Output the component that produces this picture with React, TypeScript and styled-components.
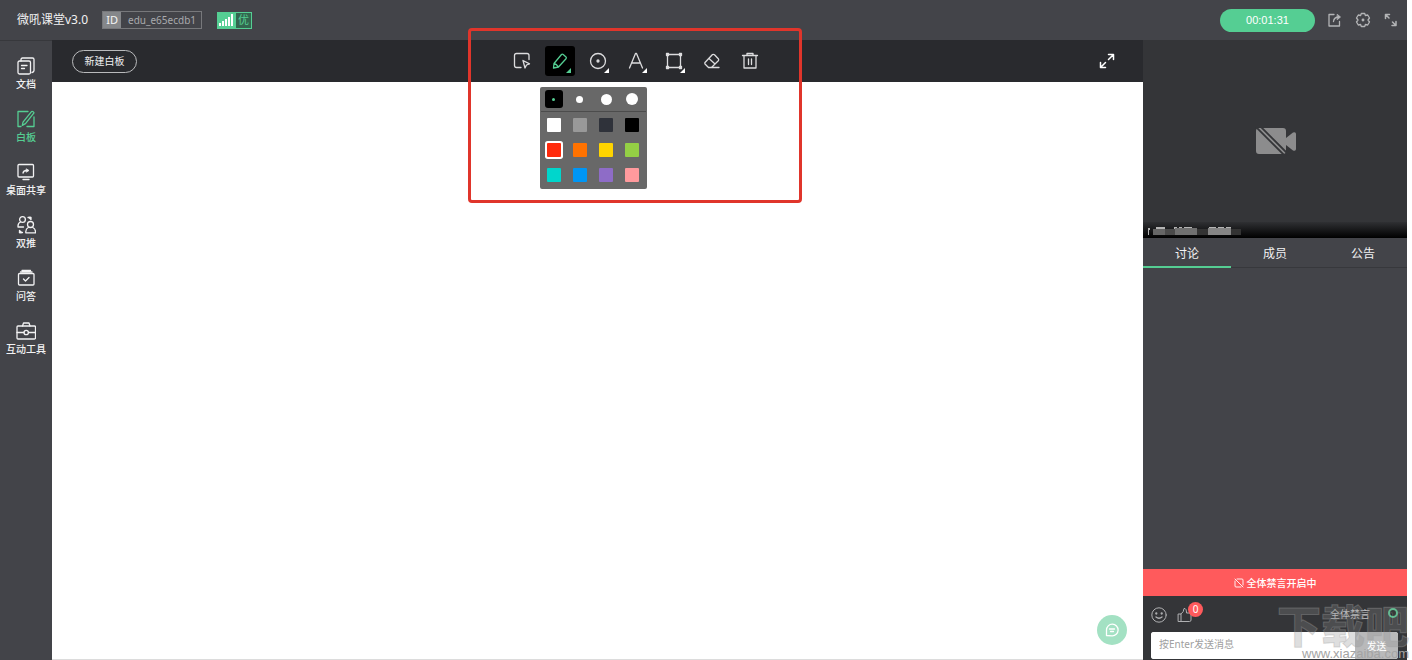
import React, { useState } from "react";
import styled, { createGlobalStyle, css } from "styled-components";

const color = {
  chrome: "#434449",
  bar: "#292a2e",
  panel: "#343538",
  line: "#37383c",
  green: "#55ce93",
  red: "#ff5a5c",
  text: "#f2f2f3",
  icon: "#dcdcde",
};

const GlobalStyle = createGlobalStyle`
  * { box-sizing: border-box; }
  body {
    margin: 0;
    background: #fff;
    font-family: "Noto Sans", "Noto Sans CJK SC", sans-serif;
    font-size: 10px;
    color: ${color.text};
  }
  button, input { font: inherit; color: inherit; }
  button { border: 0; padding: 0; background: none; cursor: pointer; }
  svg { display: block; }
`;

const Page = styled.div`
  display: grid;
  grid-template-rows: 40px 1fr;
  min-height: 100vh;
  padding-right: 5px;
  overflow: hidden;
`;

const Header = styled.header`
  display: flex;
  align-items: center;
  padding: 0 8px 0 17px;
  background: ${color.chrome};
`;

const Title = styled.h1`
  margin: 0 14px 0 0;
  font-size: 12px;
  line-height: 16px;
  font-weight: 400;
`;

const IdBox = styled.div`
  display: flex;
  width: 100px;
  height: 18px;
  margin-right: 15px;
  border: 1px solid #77787b;
  line-height: 16px;
  color: #a9aaad;
`;

const IdLabel = styled.span`
  width: 18px;
  background: #85878a;
  color: #f4f4f4;
  font-size: 11px;
  text-align: center;
`;

const IdValue = styled.span`
  flex: 1;
  text-align: center;
  padding-left: 2px;
`;

const Signal = styled.div`
  display: flex;
  align-items: center;
  gap: 2px;
  width: 35px;
  height: 17px;
  padding: 1px 1px 1px 2px;
  background: ${color.green};
`;

const SignalGrade = styled.span`
  flex: 1;
  height: 15px;
  background: #33664f;
  color: ${color.green};
  font-size: 11px;
  line-height: 14px;
  text-align: center;
`;

const HeaderActions = styled.div`
  display: flex;
  align-items: center;
  gap: 12px;
  margin-left: auto;
  color: #b3b4b6;
`;

const Timer = styled.button`
  width: 95px;
  height: 23px;
  border-radius: 12px;
  background: ${color.green};
  color: #fff;
  font-family: "Liberation Sans", sans-serif;
  font-size: 11px;
`;

const IconButton = styled.button`
  display: grid;
  place-items: center;
  width: 16px;
  height: 16px;
`;

const Body = styled.div`
  display: grid;
  grid-template-columns: 52px minmax(0, 1fr) 264px;
`;

const Sidebar = styled.nav`
  display: flex;
  flex-direction: column;
  gap: 18px;
  padding-top: 15px;
  background: ${color.chrome};
  border-top: 1px solid ${color.line};
`;

const NavItem = styled.button<{ $active?: boolean }>`
  display: flex;
  flex-direction: column;
  align-items: center;
  gap: 1px;
  line-height: 14px;
  white-space: nowrap;
  font-weight: 500;
  color: ${(p) => (p.$active ? color.green : color.text)};
`;

const Board = styled.main`
  display: flex;
  flex-direction: column;
  background: #fff;
  position: relative;
  border-bottom: 1px solid #dcdcdc;
`;

const Toolbar = styled.div`
  display: grid;
  grid-template-columns: 1fr auto 1fr;
  align-items: center;
  height: 42px;
  padding: 0 28px 0 20px;
  background: ${color.bar};
`;

const NewBoard = styled.button`
  justify-self: start;
  width: 65px;
  height: 23px;
  border: 1px solid #b9babc;
  border-radius: 12px;
  line-height: 14px;
`;

const Tools = styled.div`
  position: relative;
  display: flex;
  gap: 8px;
  margin-left: 84px;
  color: ${color.icon};
`;

const ToolSlot = styled.div`
  position: relative;
`;

const ToolButton = styled.button<{ $active?: boolean }>`
  display: grid;
  place-items: center;
  width: 30px;
  height: 30px;
  border-radius: 3px;
  ${(p) =>
    p.$active &&
    css`
      background: #000;
      color: ${color.green};
    `}
`;

const Corner = styled.svg`
  position: absolute;
  right: 4px;
  bottom: 3px;
  pointer-events: none;
`;

const Palette = styled.div`
  position: absolute;
  z-index: 2;
  top: 41px;
  left: -5px;
  width: 107px;
  padding: 0 1px 2px;
  border-radius: 2px;
  background: #686868;
`;

const PaletteRow = styled.div<{ $divided?: boolean }>`
  display: grid;
  grid-template-columns: repeat(4, 1fr);
  place-items: center;
  height: 25px;
  ${(p) => p.$divided && "border-bottom: 1px solid #4c4c4c;"}
`;

const SizeOption = styled.button<{ $size: number; $active: boolean }>`
  display: grid;
  place-items: center;
  width: 18px;
  height: 18px;
  border-radius: 3px;
  background: ${(p) => (p.$active ? "#000" : "none")};
  &::before {
    content: "";
    width: ${(p) => p.$size}px;
    height: ${(p) => p.$size}px;
    border-radius: 50%;
    background: ${(p) => (p.$active ? color.green : "#fff")};
  }
`;

const Swatch = styled.button<{ $fill: string; $active: boolean }>`
  width: 14px;
  height: 14px;
  border-radius: 1px;
  background: ${(p) => p.$fill};
  ${(p) => p.$active && "box-shadow: 0 0 0 2px #fff;"}
`;

const Callout = styled.div`
  position: absolute;
  z-index: 3;
  top: -18px;
  left: -39px;
  right: -37px;
  height: 175px;
  border: 3px solid #e0352b;
  border-radius: 4px;
  pointer-events: none;
`;

const Expand = styled(IconButton)`
  justify-self: end;
  color: #fff;
`;

const ChatBubble = styled.button`
  position: absolute;
  right: 16px;
  bottom: 14px;
  display: grid;
  place-items: center;
  width: 30px;
  height: 30px;
  border-radius: 50%;
  background: #a3e1c3;
  color: #fff;
`;

const Aside = styled.aside`
  position: relative;
  display: flex;
  flex-direction: column;
  background: ${color.chrome};
`;

const Video = styled.section`
  display: flex;
  flex-direction: column;
  height: 198px;
  background: ${color.panel};
`;

const CameraOff = styled.div`
  flex: 1;
  display: grid;
  place-items: center;
  padding: 22px 0 0 2px;
`;

const NameBar = styled.div`
  height: 16px;
  padding: 4px 0 0 5px;
  background: linear-gradient(#2f3033, #000);
`;

const Tabs = styled.div`
  display: grid;
  grid-template-columns: repeat(3, 1fr);
  height: 30px;
  border-bottom: 1px solid ${color.line};
`;

const Tab = styled.button<{ $active: boolean }>`
  height: 30px;
  padding-top: 4px;
  border-bottom: 2px solid ${(p) => (p.$active ? color.green : "transparent")};
  font-size: 12px;
  line-height: 16px;
`;

const Messages = styled.div`
  flex: 1;
`;

const MuteBanner = styled.div`
  display: flex;
  align-items: center;
  justify-content: center;
  gap: 3px;
  height: 27px;
  background: ${color.red};
  color: #fff;
  font-weight: 500;
`;

const Composer = styled.form`
  display: flex;
  flex-direction: column;
  gap: 2px;
  padding: 4px 9px 1px 8px;
  height: 64px;
  background: ${color.panel};
`;

const ComposerTools = styled.div`
  display: flex;
  align-items: center;
  gap: 9px;
  height: 30px;
  color: #b0b1b3;
`;

const LikeButton = styled(IconButton)`
  position: relative;
  width: 18px;
  height: 18px;
`;

const Badge = styled.span`
  position: absolute;
  left: 12px;
  top: -4px;
  width: 15px;
  height: 15px;
  border-radius: 50%;
  background: ${color.red};
  color: #fff;
  line-height: 15px;
  text-align: center;
`;

const MuteToggle = styled.label`
  display: flex;
  align-items: center;
  gap: 18px;
  height: 26px;
  margin-left: auto;
  align-self: flex-start;
  color: #c4c5c7;
`;

const MuteInput = styled.input`
  appearance: none;
  width: 10px;
  height: 10px;
  margin: 0;
  border: 2px solid ${color.green};
  border-radius: 50%;
  background: #16191a;
`;

const InputRow = styled.div`
  display: flex;
  height: 27px;
  border-radius: 3px;
  overflow: hidden;
  background: #fff;
`;

const MessageInput = styled.input`
  flex: 1;
  min-width: 0;
  border: 0;
  padding: 0 8px 3px;
  background: #fff;
  color: #333;
  &::placeholder {
    color: #a0a0a0;
    opacity: 1;
  }
`;

const SendButton = styled.button`
  width: 43px;
  background: #b9b9ba;
  color: #fff;
`;

const Watermark = styled.div`
  position: absolute;
  right: -2px;
  bottom: 0;
  width: 132px;
  pointer-events: none;
  text-align: right;
`;

const WatermarkName = styled.div`
  color: rgba(140, 140, 140, 0.3);
  -webkit-text-stroke: 1px rgba(160, 160, 160, 0.35);
  font-family: "Noto Sans CJK SC", sans-serif;
  font-size: 44px;
  line-height: 46px;
  font-weight: 900;
  white-space: nowrap;
`;

const WatermarkUrl = styled.div`
  font-family: "Liberation Sans", sans-serif;
  font-size: 13px;
  line-height: 13px;
  color: #a4a4a4;
`;

type IconProps = { size?: number; children: React.ReactNode };

const Icon = ({ size = 20, children }: IconProps) => (
  <svg
    width={size}
    height={size}
    viewBox={`0 0 ${size} ${size}`}
    fill="none"
    stroke="currentColor"
    strokeWidth="1.3"
    strokeLinecap="round"
    strokeLinejoin="round"
    aria-hidden="true"
  >
    {children}
  </svg>
);

const navItems = [
  {
    label: "文档",
    icon: (
      <>
        <rect x="2" y="5" width="12.5" height="13" rx="1.5" />
        <path d="M5 5V3.5Q5 2 6.500 2H16.500Q18 2 18 3.500V14.500Q18 16 16 16.500M5.500 9.500H11M5.500 12.500H8.500" />
      </>
    ),
  },
  {
    label: "白板",
    icon: (
      <>
        <path d="M12 2.500H2V17.500H5M11 17.500H18V8M7 13.200L15.500 2.600Q17 2 18 3.800L9.500 14.600L6.300 16.400Z" />
      </>
    ),
  },
  {
    label: "桌面共享",
    icon: (
      <>
        <rect x="2" y="2.500" width="15.500" height="12.500" rx="1" />
        <path d="M7 17.500H13M7 11Q7.500 8.500 10.500 8.500" />
        <path d="M10.500 7L13 8.500L10.500 10Z" fill="currentColor" strokeWidth="0.800" />
      </>
    ),
  },
  {
    label: "双推",
    icon: (
      <>
        <circle cx="6.500" cy="4.500" r="2.900" />
        <path d="M4.500 7Q2 8 2 11V12H7.500M14 17.800H19.500V16.500Q19.200 13.500 16.800 12.500M9.800 17.800H14M9.800 17.800V16.500Q10 13.500 12.300 12.500M12 2.500H14.500M3.500 17.500H6.500" />
        <circle cx="14.500" cy="9.500" r="3" />
        <path d="M13 2.500H15V4.500ZM3.500 15.500V17.500H5.500Z" fill="currentColor" />
      </>
    ),
  },
  {
    label: "问答",
    icon: (
      <>
        <rect x="2.500" y="5.500" width="15.500" height="11.500" rx="1" />
        <path d="M6 2.500H14.500M4.500 4H16M7.500 11L9.500 13L13 9.500" />
      </>
    ),
  },
  {
    label: "互动工具",
    icon: (
      <>
        <rect x="1" y="5" width="18.500" height="13" rx="1" />
        <path d="M6.500 5L7.500 2H13L14 5M1 11.500H8M12.500 11.500H19.500" />
        <circle cx="10.200" cy="11.500" r="2.200" />
      </>
    ),
  },
];

const tools = [
  {
    label: "选择",
    menu: false,
    icon: (
      <>
        <path d="M9 16.500H4.500Q2.500 16.500 2.500 14.500V4.500Q2.500 2.500 4.500 2.500H15Q17 2.500 17 4.500V8.500" />
        <path d="M11 9.500L17.500 12.800L14.500 14L13 17Z" />
      </>
    ),
  },
  {
    label: "画笔",
    menu: true,
    icon: (
      <path d="M4 12.500L11.500 3.500Q12.300 2.700 13.200 3.500L16 6Q16.800 6.800 16 7.700L8.500 16L3.500 17ZM4 12.500Q6.500 13 8.500 16" />
    ),
  },
  {
    label: "图形",
    menu: true,
    icon: (
      <>
        <circle cx="10" cy="10" r="7.500" />
        <circle cx="10" cy="10" r="1" fill="currentColor" />
      </>
    ),
  },
  {
    label: "文字",
    menu: true,
    icon: <path d="M3.500 17L9.500 2.500H10.500L16.500 17M5.500 12H14.500" />,
  },
  {
    label: "选框",
    menu: true,
    icon: (
      <>
        <rect x="3.500" y="3.500" width="13" height="13" />
        <path
          d="M2.500 2.500H4.500V4.500H2.500ZM15.500 2.500H17.500V4.500H15.500ZM2.500 15.500H4.500V17.500H2.500ZM15.500 15.500H17.500V17.500H15.500Z"
          fill="currentColor"
        />
      </>
    ),
  },
  {
    label: "橡皮擦",
    menu: false,
    icon: (
      <path d="M3 11.500L10.500 3.500Q11.500 3 12.500 3.800L16.500 8Q17 9 16.300 9.800L9.500 16.500H6.500L3 13Q2.500 12.200 3 11.500ZM7 7.500L13 13M9.500 16.500H17" />
    ),
  },
  {
    label: "清空",
    menu: false,
    icon: (
      <path d="M2.500 4.500H17.500M7 4V2.500H13V4M4 4.500V17H16V4.500M8.500 8V13.500M11.500 8V13.500" />
    ),
  },
];

const sizes = [3, 7, 11, 12];
const swatches = [
  ["#ffffff", "#999999", "#2f323a", "#000000"],
  ["#ff2a0c", "#ff7200", "#ffd400", "#94cf45"],
  ["#00d6cc", "#0096f5", "#8e6cc7", "#ff9a9d"],
];
const tabs = ["讨论", "成员", "公告"];

export default function App() {
  const [nav, setNav] = useState("白板");
  const [tool, setTool] = useState("画笔");
  const [size, setSize] = useState(3);
  const [ink, setInk] = useState("#ff2a0c");
  const [tab, setTab] = useState("讨论");

  return (
    <>
      <GlobalStyle />
      <Page>
        <Header>
          <Title>微吼课堂v3.0</Title>
          <IdBox>
            <IdLabel>ID</IdLabel>
            <IdValue>edu_e65ecdb1</IdValue>
          </IdBox>
          <Signal>
            <svg width="15" height="12" viewBox="0 0 15 12" fill="#fff" aria-hidden="true">
              <path d="M0 9H2V12H0ZM3 7H5V12H3ZM6 5H8V12H6ZM9 3H11V12H9ZM12 0H14V12H12Z" />
            </svg>
            <SignalGrade>优</SignalGrade>
          </Signal>
          <HeaderActions>
            <Timer>00:01:31</Timer>
            <IconButton aria-label="退出">
              <Icon size={16}>
                <path d="M7 2.500H2V14H12.500V9.500M6.500 9.500Q7 5 12 5" />
                <path d="M10.500 2.500L13.500 5L10.500 7.500Z" fill="currentColor" strokeWidth="0.800" />
              </Icon>
            </IconButton>
            <IconButton aria-label="设置">
              <Icon size={16}>
                <path d="M6.300 1.500H9.700L10.400 3.500L12.700 3L14.500 6L13 8L14.500 10L12.700 13L10.400 12.500L9.700 14.500H6.300L5.600 12.500L3.300 13L1.500 10L3 8L1.500 6L3.300 3L5.600 3.500Z" />
                <circle cx="8" cy="8" r="0.800" fill="currentColor" />
              </Icon>
            </IconButton>
            <IconButton aria-label="全屏">
              <Icon size={16}>
                <path d="M2.500 6.500V2.500H6.500M2.500 2.500L6 6M13 9.500V13.500H9M13 13.500L9.500 10" strokeWidth="1.500" />
              </Icon>
            </IconButton>
          </HeaderActions>
        </Header>

        <Body>
          <Sidebar>
            {navItems.map((item) => (
              <NavItem
                key={item.label}
                $active={item.label === nav}
                onClick={() => setNav(item.label)}
              >
                <Icon>{item.icon}</Icon>
                {item.label}
              </NavItem>
            ))}
          </Sidebar>

          <Board>
            <Toolbar>
              <NewBoard>新建白板</NewBoard>
              <Tools>
                {tools.map((item) => (
                  <ToolSlot key={item.label}>
                    <ToolButton
                      aria-label={item.label}
                      $active={item.label === tool}
                      onClick={() => setTool(item.label)}
                    >
                      <Icon>{item.icon}</Icon>
                    </ToolButton>
                    {item.menu && (
                      <Corner width="5" height="5" viewBox="0 0 5 5" aria-hidden="true">
                        <path d="M5 0V5H0Z" fill={item.label === tool ? color.green : "#fff"} />
                      </Corner>
                    )}
                    {item.label === "画笔" && (
                      <Palette>
                        <PaletteRow $divided>
                          {sizes.map((s) => (
                            <SizeOption
                              key={s}
                              aria-label={`粗细 ${s}`}
                              $size={s}
                              $active={s === size}
                              onClick={() => setSize(s)}
                            />
                          ))}
                        </PaletteRow>
                        {swatches.map((row) => (
                          <PaletteRow key={row[0]}>
                            {row.map((c) => (
                              <Swatch
                                key={c}
                                aria-label={c}
                                $fill={c}
                                $active={c === ink}
                                onClick={() => setInk(c)}
                              />
                            ))}
                          </PaletteRow>
                        ))}
                      </Palette>
                    )}
                  </ToolSlot>
                ))}
                <Callout />
              </Tools>
              <Expand aria-label="展开白板">
                <Icon size={16}>
                  <path d="M9.500 1.500H14.500V6.500M14.500 1.500L9.500 6.500M1.500 9.500V14.500H6.500M1.500 14.500L6.500 9.500" strokeWidth="1.500" />
                </Icon>
              </Expand>
            </Toolbar>
            <ChatBubble aria-label="聊天">
              <Icon size={16}>
                <path d="M2.500 13.500V8A5.800 5.800 0 1 1 8 13.800ZM5.500 7H10.500M6.500 9.500H9.500" />
              </Icon>
            </ChatBubble>
          </Board>

          <Aside>
            <Video>
              <CameraOff>
                <svg width="42" height="30" viewBox="0 0 42 30" aria-hidden="true">
                  <path
                    d="M4 1H28Q31 1 31 4V11L38 5.500Q41 4.500 41 7V22Q41 24.500 38 23.500L31 18V24Q31 27 28 27H4Q1 27 1 24V4Q1 1 4 1Z"
                    fill="#8c8c8d"
                  />
                  <path d="M0 -1L31 30M5 -1L34 28" stroke={color.panel} strokeWidth="1.800" />
                </svg>
              </CameraOff>
              <NameBar>
                <svg width="94" height="11" viewBox="0 0 94 11" aria-hidden="true">
                  <path d="M0 2H2V4H1V9H0ZM8 1H17V3H8ZM26 1H29V3H26ZM31 1H34V3H31ZM36 1H44V3H36ZM61 1H68V3H61ZM70 1H76V3H70ZM78 1H83V3H78Z" fill="#b4b4b4" />
                  <path d="M5 3H17V9H5Z" fill="#666" />
                  <path d="M17 3H27V9H17Z" fill="#4a4a4a" />
                  <path d="M27 2H49V9H27Z" fill="#707070" />
                  <path d="M49 3H60V9H49ZM83 3H93V9H83Z" fill="#333" />
                  <path d="M60 2H83V9H60Z" fill="#858585" />
                </svg>
              </NameBar>
            </Video>
            <Tabs role="tablist">
              {tabs.map((name) => (
                <Tab
                  key={name}
                  role="tab"
                  aria-selected={name === tab}
                  $active={name === tab}
                  onClick={() => setTab(name)}
                >
                  {name}
                </Tab>
              ))}
            </Tabs>
            <Messages />
            <MuteBanner>
              <Icon size={10}>
                <path d="M1 1L9 9M3 1H8Q9 1 9 2V7M1 3V8Q1 9 2 9H7" strokeWidth="0.900" />
              </Icon>
              全体禁言开启中
            </MuteBanner>
            <Composer onSubmit={(e) => e.preventDefault()}>
              <ComposerTools>
                <IconButton type="button" aria-label="表情">
                  <Icon size={16}>
                    <circle cx="8" cy="8" r="7.200" strokeWidth="1" />
                    <circle cx="5.300" cy="6.500" r="0.500" fill="currentColor" />
                    <circle cx="10.700" cy="6.500" r="0.500" fill="currentColor" />
                    <path d="M5 10Q8 12.500 11 10" />
                  </Icon>
                </IconButton>
                <LikeButton type="button" aria-label="点赞">
                  <Icon size={18}>
                    <path d="M2.500 8H5V15.500H2.500ZM5 8Q8 6 8 2.500Q10.500 2 10.500 7H15V14Q15 15.500 13.500 15.500H5" strokeWidth="1" />
                  </Icon>
                  <Badge>0</Badge>
                </LikeButton>
                <MuteToggle>
                  全体禁言
                  <MuteInput type="checkbox" defaultChecked />
                </MuteToggle>
              </ComposerTools>
              <InputRow>
                <MessageInput aria-label="消息" placeholder="按Enter发送消息" />
                <SendButton type="submit">发送</SendButton>
              </InputRow>
            </Composer>
            <Watermark>
              <WatermarkName>下载吧</WatermarkName>
              <WatermarkUrl>www.xiazaiba.com</WatermarkUrl>
            </Watermark>
          </Aside>
        </Body>
      </Page>
    </>
  );
}
